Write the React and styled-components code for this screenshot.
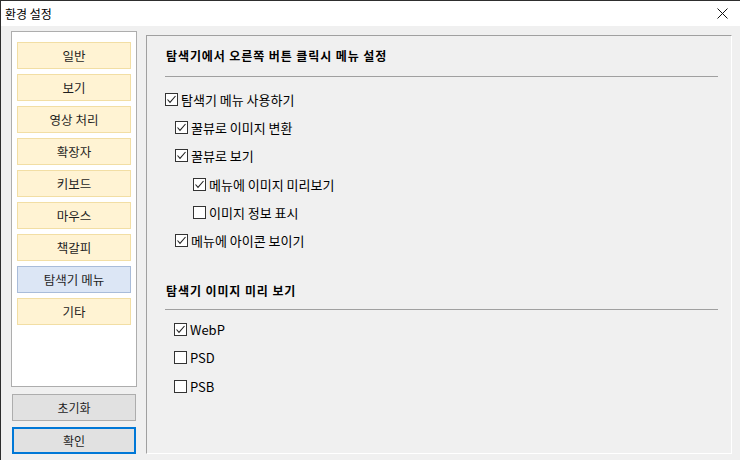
import React from "react";
import styled, { createGlobalStyle } from "styled-components";

const Global = createGlobalStyle`
  html, body {
    margin: 0;
    padding: 0;
    background: #f0f0f0;
  }
  body {
    font-family: "Noto Sans CJK KR", "Noto Sans", sans-serif;
    color: #000;
  }
`;

const Window = styled.div`
  width: 740px;
  height: 460px;
  box-sizing: border-box;
  border-top: 1px solid #2e2e2e;
  border-left: 1px solid #2e2e2e;
  background: #f0f0f0;
  display: flex;
  flex-direction: column;
  overflow: hidden;
`;

const TitleBar = styled.div`
  height: 25px;
  flex-shrink: 0;
  background: #fff;
  display: flex;
  align-items: center;
  justify-content: space-between;
  padding: 0 8px 0 4px;
`;

const Title = styled.span`
  font-size: 12px;
  line-height: 16px;
`;

const Close = styled.button`
  width: 20px;
  height: 20px;
  padding: 0;
  border: none;
  background: transparent;
  display: flex;
  align-items: center;
  justify-content: center;
`;

const Body = styled.div`
  flex: 1;
  display: flex;
  gap: 9px;
  padding: 5px 8px 6px 10px;
  min-height: 0;
`;

const Side = styled.div`
  width: 126px;
  flex-shrink: 0;
  display: flex;
  flex-direction: column;
`;

const NavList = styled.div`
  height: 356px;
  box-sizing: border-box;
  border: 1px solid #adadad;
  background: #fff;
  padding: 10px 5px 0 5px;
  display: flex;
  flex-direction: column;
  gap: 5px;
`;

const NavItem = styled.div`
  height: 27px;
  box-sizing: border-box;
  border: 1px solid ${({ $active }) => ($active ? "#a9bcd9" : "#f2dea4")};
  background: ${({ $active }) => ($active ? "#dce6f5" : "#fff3d3")};
  display: flex;
  align-items: center;
  justify-content: center;
  font-size: 12.5px;
  color: #1e1e1e;
`;

const Button = styled.button`
  height: 27px;
  margin: ${({ $top }) => $top}px 1px 0 1px;
  box-sizing: border-box;
  border: ${({ $primary }) => ($primary ? "2px solid #0078d7" : "1px solid #adadad")};
  background: #e1e1e1;
  font-family: inherit;
  font-size: 12px;
  color: #1e1e1e;
  padding: 0;
`;

const Panel = styled.div`
  flex: 1;
  margin-top: 4px;
  box-sizing: border-box;
  border-top: 1px solid #a0a0a0;
  border-left: 1px solid #a0a0a0;
  border-right: 1px solid #fff;
  border-bottom: 1px solid #fff;
  padding: 12px 13px 0 18px;
  display: flex;
  flex-direction: column;
`;

const Heading = styled.div`
  font-size: 12px;
  font-weight: 700;
  line-height: 16px;
  letter-spacing: 0.9px;
  margin-top: ${({ $top }) => $top || 0}px;
  padding-left: 1px;
`;

const Divider = styled.div`
  height: 1px;
  background: #a0a0a0;
  margin: ${({ $top }) => $top}px 0 ${({ $bottom }) => $bottom}px 0;
`;

const Row = styled.label`
  height: ${({ $h }) => $h}px;
  display: flex;
  align-items: center;
  padding-left: ${({ $indent }) => $indent}px;
  font-size: 13px;
  gap: 3px;
`;

const Box = styled.span`
  width: 13px;
  height: 13px;
  box-sizing: border-box;
  border: 1px solid #333;
  background: #fff;
  flex-shrink: 0;
  display: flex;
  align-items: center;
  justify-content: center;
`;

function Check({ checked }) {
  return (
    <Box>
      {checked && (
        <svg width="11" height="11" viewBox="0 0 11 11">
          <polyline points="1.5,5.5 4,8.3 9.5,2" fill="none" stroke="#222" strokeWidth="1.1" />
        </svg>
      )}
    </Box>
  );
}

const navItems = ["일반", "보기", "영상 처리", "확장자", "키보드", "마우스", "책갈피", "탐색기 메뉴", "기타"];

const menuOptions = [
  { label: "탐색기 메뉴 사용하기", indent: 0, checked: true },
  { label: "꿀뷰로 이미지 변환", indent: 10, checked: true },
  { label: "꿀뷰로 보기", indent: 10, checked: true },
  { label: "메뉴에 이미지 미리보기", indent: 28, checked: true },
  { label: "이미지 정보 표시", indent: 28, checked: false },
  { label: "메뉴에 아이콘 보이기", indent: 10, checked: true },
];

const previewOptions = [
  { label: "WebP", checked: true },
  { label: "PSD", checked: false },
  { label: "PSB", checked: false },
];

export default function App() {
  return (
    <>
      <Global />
      <Window>
        <TitleBar>
          <Title>환경 설정</Title>
          <Close>
            <svg width="11" height="11" viewBox="0 0 11 11">
              <path d="M0.5 0.5 L10.5 10.5 M10.5 0.5 L0.5 10.5" stroke="#111" strokeWidth="1" />
            </svg>
          </Close>
        </TitleBar>
        <Body>
          <Side>
            <NavList>
              {navItems.map((n) => (
                <NavItem key={n} $active={n === "탐색기 메뉴"}>{n}</NavItem>
              ))}
            </NavList>
            <Button $top={7}>초기화</Button>
            <Button $top={6} $primary>확인</Button>
          </Side>
          <Panel>
            <Heading>탐색기에서 오른쪽 버튼 클릭시 메뉴 설정</Heading>
            <Divider $top={12} $bottom={8} />
            {menuOptions.map((o) => (
              <Row key={o.label} $h={28.3} $indent={o.indent}>
                <Check checked={o.checked} />
                {o.label}
              </Row>
            ))}
            <Heading $top={28}>탐색기 이미지 미리 보기</Heading>
            <Divider $top={10} $bottom={5} />
            {previewOptions.map((o) => (
              <Row key={o.label} $h={28.7} $indent={9}>
                <Check checked={o.checked} />
                {o.label}
              </Row>
            ))}
          </Panel>
        </Body>
      </Window>
    </>
  );
}
